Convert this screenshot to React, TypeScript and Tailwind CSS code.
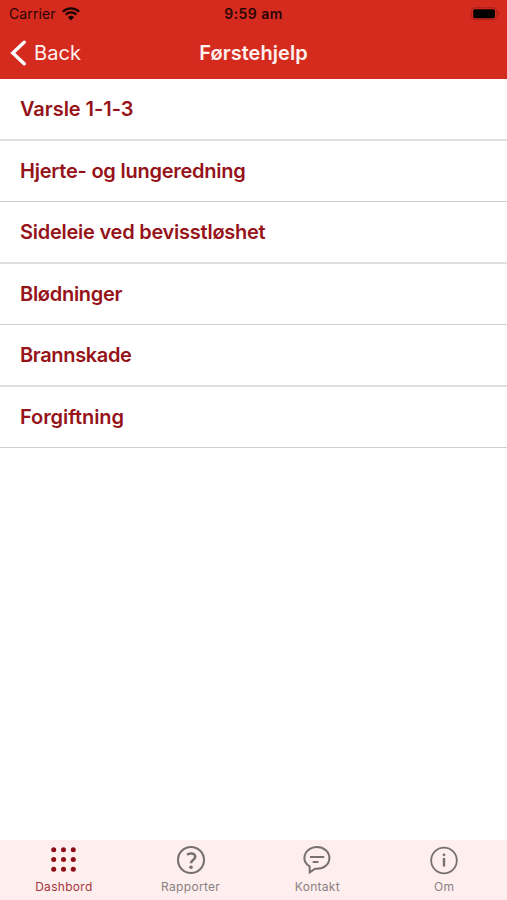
import React from "react";

const topics = [
  { label: "Varsle 1-1-3", tracking: "tracking-[-0.05px]" },
  { label: "Hjerte- og lungeredning", tracking: "tracking-[-0.24px]" },
  { label: "Sideleie ved bevisstløshet", tracking: "tracking-[-0.25px]" },
  { label: "Blødninger", tracking: "tracking-[-0.28px]" },
  { label: "Brannskade", tracking: "tracking-[-0.35px]" },
  { label: "Forgiftning", tracking: "tracking-[-0.08px]" },
];

function WifiIcon() {
  return (
    <svg width="18" height="14" viewBox="0 0 18 14" fill="none" stroke="#180302">
      <path d="M0.9 4.7a11.7 11.7 0 0 1 16.2 0" strokeWidth="2.3" />
      <path d="M3.7 7.6a7.6 7.6 0 0 1 10.6 0" strokeWidth="2.2" />
      <path d="M9 13.4 5.9 10.2a4.5 4.5 0 0 1 6.2 0z" fill="#180302" stroke="none" />
    </svg>
  );
}

function BatteryIcon() {
  return (
    <svg width="30" height="14" viewBox="0 0 30 14">
      <rect x="1.5" y="0.7" width="25.2" height="12" rx="3.4" fill="none" stroke="#a9211a" />
      <rect x="3.2" y="2.2" width="21.8" height="9" rx="1.8" fill="#000" />
      <path d="M28.2 4.7c1.9.7 1.9 3.3 0 4z" fill="#a9211a" />
    </svg>
  );
}

function GridIcon() {
  return (
    <svg width="30" height="30" viewBox="0 0 30 30" fill="#8e1016">
      {[4.7, 14.4, 24.2].map((y) =>
        [4.7, 14.5, 24.3].map((x) => <circle key={`${x}-${y}`} cx={x} cy={y} r="2.5" />)
      )}
    </svg>
  );
}

function QuestionIcon() {
  return (
    <svg width="30" height="30" viewBox="0 0 30 30" fill="none" stroke="#777071">
      <circle cx="15" cy="15" r="13" strokeWidth="2.1" />
      <path d="M11 9.7c2.2-1.8 8.2-1.9 8.2 2 0 3.4-4.2 3.2-4.2 6.5" strokeWidth="2.5" />
      <circle cx="15" cy="22.2" r="1.8" fill="#777071" stroke="none" />
    </svg>
  );
}

function ChatIcon() {
  return (
    <svg width="30" height="30" viewBox="0 0 30 30" fill="none" stroke="#777071" strokeWidth="2">
      <path d="M7.6 21.4C4.6 19.6 2.4 16.9 2.4 13.3 2.4 7 8 2 15 2s12.4 4.8 12.4 11.1S22 23.8 15 23.8c-.6 0-1.3 0-2-.1l-5.2 3.6z" />
      <path d="M8 11.9h14.2M10.7 16.9h5.8" />
    </svg>
  );
}

function InfoIcon() {
  return (
    <svg width="30" height="30" viewBox="0 0 30 30" fill="none" stroke="#777071">
      <circle cx="15" cy="15.5" r="12.8" strokeWidth="1.8" />
      <path d="M15 12.9v8.6" strokeWidth="2.4" />
      <circle cx="15" cy="9.8" r="1.4" fill="#777071" stroke="none" />
    </svg>
  );
}

const tabs = [
  { label: "Dashbord", Icon: GridIcon, color: "text-[#a6363c]" },
  { label: "Rapporter", Icon: QuestionIcon, color: "text-[#888182]" },
  { label: "Kontakt", Icon: ChatIcon, color: "text-[#888182]" },
  { label: "Om", Icon: InfoIcon, color: "text-[#888182]" },
];

export default function App() {
  return (
    <div className="flex h-[900px] w-[507px] flex-col overflow-hidden bg-white font-['Inter',sans-serif]">
      <header className="h-[79px] shrink-0 bg-[#d52b1e]">
        <div className="grid h-[27px] grid-cols-3 items-center px-[9px] text-[14px] text-[#2b0504]">
          <div className="flex items-center gap-[6px]">
            <span className="tracking-[0.1px]">Carrier</span>
            <WifiIcon />
          </div>
          <span className="text-center font-semibold tracking-[0.45px]">9:59 am</span>
          <div className="-mr-[2px] flex justify-end">
            <BatteryIcon />
          </div>
        </div>
        <div className="grid h-[52px] grid-cols-3 items-center px-[10px] text-[20px] text-[#fff1ef]">
          <div className="flex items-center gap-[7px]">
            <svg width="17" height="26" viewBox="0 0 17 26" fill="none" stroke="#fff" strokeWidth="3.4" strokeLinecap="round">
              <path d="M14.2 2.2 2.8 13l11.4 10.8" />
            </svg>
            <span className="tracking-[0.1px]">Back</span>
          </div>
          <h1 className="text-center font-semibold tracking-[0.05px]">Førstehjelp</h1>
        </div>
      </header>
      <main className="flex-1">
        {topics.map((t) => (
          <div
            key={t.label}
            className="flex h-[61px] items-center border-b border-[#cfcfcf] px-[20px] text-[20px] font-semibold text-[#951319] odd:h-[62px] odd:border-b-2 odd:border-[#dfdfdf]"
          >
            <span className={t.tracking}>{t.label}</span>
          </div>
        ))}
      </main>
      <nav className="grid h-[60px] shrink-0 grid-cols-4 bg-[#feeeee]">
        {tabs.map(({ label, Icon, color }) => (
          <div key={label} className="flex flex-col items-center pt-[5px] pl-px">
            <Icon />
            <span className={`mt-[3px] text-[12px] leading-[17px] tracking-[0.3px] ${color}`}>{label}</span>
          </div>
        ))}
      </nav>
    </div>
  );
}
